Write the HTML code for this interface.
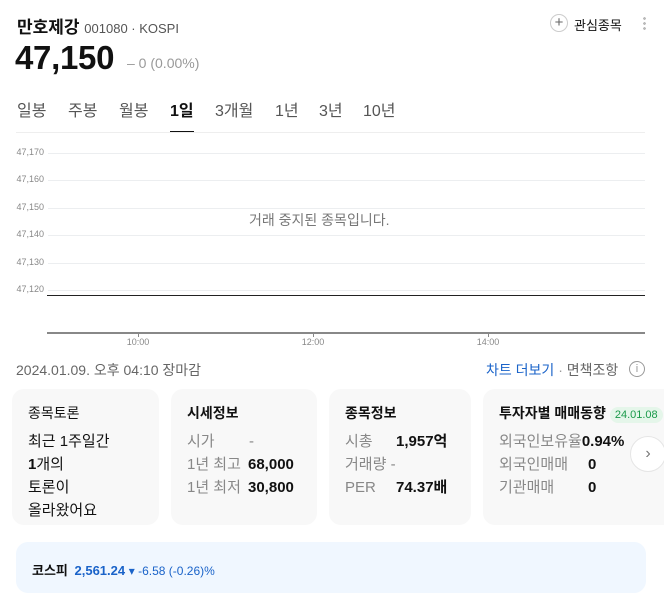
<!DOCTYPE html>
<html><head><meta charset="utf-8"><style>
*{margin:0;padding:0;box-sizing:border-box}
body{width:664px;height:605px;background:#fff;font-family:"Liberation Sans","Noto Sans CJK KR",sans-serif;color:#111;position:relative;overflow:hidden}
.a{position:absolute;white-space:nowrap}
.g{position:absolute;left:48px;width:597px;height:1px;background:#eceef0}
.yl{position:absolute;left:0;width:44px;text-align:right;font-size:9px;color:#888}
.xl{position:absolute;font-size:9px;color:#888;transform:translateX(-50%)}
.card{position:absolute;top:389px;height:136px;background:#f8f8f8;border-radius:12px;padding:14px 0 0 16px}
.card h4{font-size:14px;font-weight:bold;margin-bottom:7px}
.row{font-size:15px;line-height:23px;color:#888;position:relative}
.row b{color:#111}
.v{position:absolute}
</style></head><body>
<div class="a" style="left:17px;top:13px;font-size:17px;font-weight:bold">만호제강 <span style="font-size:13px;font-weight:normal;color:#555">001080 · KOSPI</span></div>
<div class="a" style="left:550px;top:14px;width:18px;height:18px;border:1px solid #ccc;border-radius:50%;text-align:center;font-size:15px;line-height:15px;color:#666">+</div>
<div class="a" style="left:574px;top:15px;font-size:13px">관심종목</div>
<div class="a" style="left:643px;top:16px;width:3px;height:15px;background:radial-gradient(circle,#bbb 1.3px,transparent 1.5px) 0 0/3px 5px"></div>
<div class="a" style="left:15px;top:39px;font-size:33px;font-weight:bold;letter-spacing:-0.3px">47,150</div>
<div class="a" style="left:127px;top:55px;font-size:14px;color:#999">– 0 (0.00%)</div>
<div class="a" style="left:17px;top:97px;font-size:16px;color:#555">일봉</div>
<div class="a" style="left:68px;top:97px;font-size:16px;color:#555">주봉</div>
<div class="a" style="left:119px;top:97px;font-size:16px;color:#555">월봉</div>
<div class="a" style="left:170px;top:97px;font-size:16px;font-weight:bold">1일</div>
<div class="a" style="left:170px;top:131px;width:24px;height:2px;background:#111"></div>
<div class="a" style="left:215px;top:97px;font-size:16px;color:#555">3개월</div>
<div class="a" style="left:275px;top:97px;font-size:16px;color:#555">1년</div>
<div class="a" style="left:319px;top:97px;font-size:16px;color:#555">3년</div>
<div class="a" style="left:363px;top:97px;font-size:16px;color:#555">10년</div>
<div class="a" style="left:16px;top:132px;width:629px;height:1px;background:#eee"></div>
<div class="g" style="top:153px"></div><div class="yl" style="top:147px">47,170</div>
<div class="g" style="top:180px"></div><div class="yl" style="top:174px">47,160</div>
<div class="g" style="top:208px"></div><div class="yl" style="top:202px">47,150</div>
<div class="g" style="top:235px"></div><div class="yl" style="top:229px">47,140</div>
<div class="g" style="top:263px"></div><div class="yl" style="top:257px">47,130</div>
<div class="g" style="top:290px"></div><div class="yl" style="top:284px">47,120</div>
<div class="a" style="left:47px;top:295px;width:598px;height:1px;background:#222"></div>
<div class="a" style="left:47px;top:332px;width:598px;height:2px;background:#888"></div>
<div class="a" style="left:138px;top:334px;width:1px;height:3px;background:#888"></div>
<div class="a" style="left:313px;top:334px;width:1px;height:3px;background:#888"></div>
<div class="a" style="left:488px;top:334px;width:1px;height:3px;background:#888"></div>
<div class="xl" style="left:138px;top:337px">10:00</div>
<div class="xl" style="left:313px;top:337px">12:00</div>
<div class="xl" style="left:488px;top:337px">14:00</div>
<div class="a" style="left:249px;top:210px;font-size:14px;color:#777">거래 중지된 종목입니다.</div>
<div class="a" style="left:16px;top:360px;font-size:14px;color:#666">2024.01.09. 오후 04:10 장마감</div>
<div class="a" style="left:486px;top:360px;font-size:14px;color:#1a63c9">차트 더보기 <span style="color:#999">·</span> <span style="color:#666">면책조항</span></div>
<div class="a" style="left:629px;top:361px;width:16px;height:16px;border:1px solid #999;border-radius:50%;text-align:center;font-size:11px;line-height:14px;color:#999">i</div>
<div class="card" style="left:12px;width:147px"><div style="font-size:14px;margin-bottom:7px">종목토론</div><div style="font-size:15px;line-height:23px">최근 1주일간<br><b>1</b>개의<br>토론이<br>올라왔어요</div></div>
<div class="card" style="left:171px;width:146px"><h4>시세정보</h4><div class="row">시가<span class="v" style="left:62px">-</span><br>1년 최고<b class="v" style="left:61px">68,000</b><br>1년 최저<b class="v" style="left:61px">30,800</b></div></div>
<div class="card" style="left:329px;width:142px"><h4>종목정보</h4><div class="row">시총<b class="v" style="left:51px">1,957억</b><br>거래량 -<br>PER<b class="v" style="left:51px">74.37배</b></div></div>
<div class="card" style="left:483px;width:200px"><h4>투자자별 매매동향 <span style="font-size:11px;font-weight:normal;color:#1a9a4a;background:#e5f6ea;border-radius:9px;padding:2px 5px">24.01.08</span></h4><div class="row">외국인보유율<b>0.94%</b><br>외국인매매<b class="v" style="left:89px">0</b><br>기관매매<b class="v" style="left:89px">0</b></div></div>
<div class="a" style="left:630px;top:436px;width:36px;height:36px;border-radius:50%;background:#fff;border:1px solid #e5e5e5;text-align:center;line-height:34px;font-size:16px;color:#777">›</div>
<div class="a" style="left:16px;top:542px;width:630px;height:51px;background:#f0f7ff;border-radius:12px"></div>
<div class="a" style="left:32px;top:560px;font-size:13px;font-weight:bold">코스피 <span style="color:#1a63c9;margin-left:3px">2,561.24</span> <span style="color:#1a63c9;font-weight:normal;font-size:12px">▾ -6.58 (-0.26)%</span></div>
</body></html>
